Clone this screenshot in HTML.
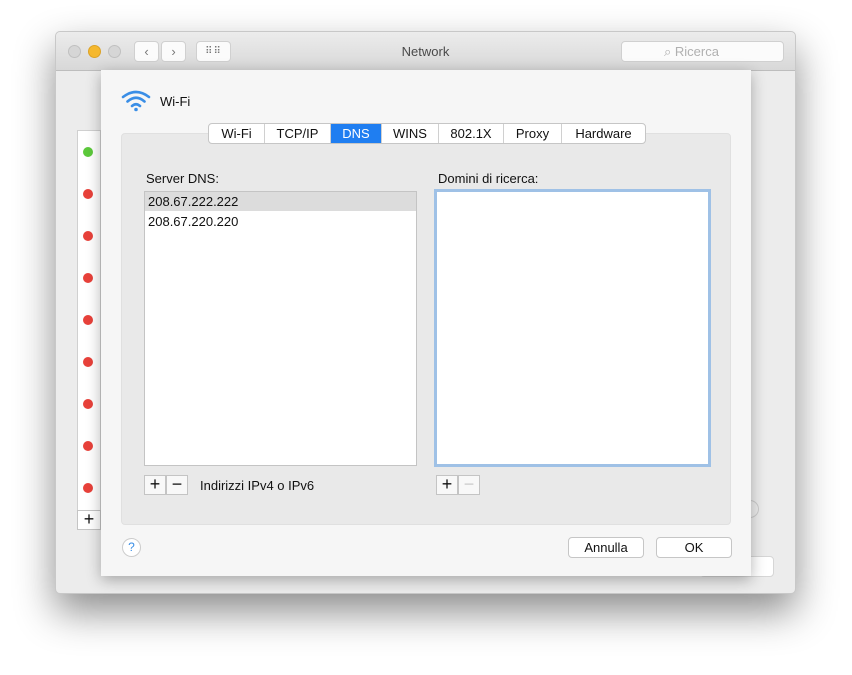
<!DOCTYPE html><html><head><style>
*{margin:0;padding:0;box-sizing:border-box}
body{width:852px;height:675px;background:#fff;font-family:"Liberation Sans",sans-serif;font-size:13px;color:#111;position:relative;overflow:hidden}
.a{position:absolute}
.win{left:55px;top:31px;width:741px;height:563px;background:#ececec;border:1px solid #c8c8c8;border-radius:5px;box-shadow:0 18px 40px rgba(0,0,0,.45)}
.tb{left:0;top:0;width:739px;height:39px;background:linear-gradient(#ececec,#d8d8d8);border-bottom:1px solid #bdbdbd;border-radius:5px 5px 0 0}
.light{width:13px;height:13px;border-radius:50%;top:13px;background:#d6d6d6;border:1px solid #c0c0c0}
.nb{top:9px;height:21px;background:#fbfbfb;border:1px solid #d0d0d0;border-radius:4px;color:#777;text-align:center;line-height:19px}
.sheet{left:101px;top:70px;width:650px;height:506px;background:#f6f6f6;box-shadow:0 4px 14px rgba(0,0,0,.3)}
.grp{left:121px;top:133px;width:610px;height:392px;background:#e9e9e9;border:1px solid #e0e0e0;border-radius:4px}
.tabs{left:208px;top:123px;height:21px;display:flex;background:#fff;border:1px solid #c6c6c6;border-radius:4px;overflow:hidden}
.tabs div{border-right:1px solid #d0d0d0;text-align:center;line-height:19px;font-size:13px}
.tabs div:last-child{border:none}
.list{background:#fff;border:1px solid #c4c4c4}
.pm{height:20px;width:22px;border:1px solid #c4c4c4;background:#f8f8f8;text-align:center;line-height:17px;font-size:18px}
.btn{top:537px;height:21px;background:#fff;border:1px solid #c6c6c6;border-radius:4px;text-align:center;line-height:19px}
.dot{left:83px;width:10px;height:10px;border-radius:50%;background:#e8413a}
</style></head><body>
<div class="a win">
<div class="a tb">
<div class="a light" style="left:12px"></div>
<div class="a light" style="left:32px;background:#f5b82e;border-color:#dca226"></div>
<div class="a light" style="left:52px"></div>
<div class="a nb" style="left:78px;width:25px">‹</div>
<div class="a nb" style="left:105px;width:25px">›</div>
<div class="a nb" style="left:140px;width:35px;font-size:10px;letter-spacing:1px">⠿⠿</div>
<div class="a" style="left:0;width:739px;top:12px;text-align:center;color:#4a4a4a">Network</div>
<div class="a nb" style="left:565px;width:163px;text-align:left;padding-left:42px;color:#b0b0b0">⌕ Ricerca</div>
</div>
</div>
<div class="a list" style="left:77px;top:130px;width:24px;height:400px;border-color:#d0d0d0"></div>
<div class="a dot" style="top:147px;background:#5cc93b"></div>
<div class="a dot" style="top:189px"></div><div class="a dot" style="top:231px"></div><div class="a dot" style="top:273px"></div><div class="a dot" style="top:315px"></div><div class="a dot" style="top:357px"></div><div class="a dot" style="top:399px"></div><div class="a dot" style="top:441px"></div><div class="a dot" style="top:483px"></div>
<div class="a pm" style="left:77px;top:510px;width:24px;height:20px;background:#fff">+</div>
<div class="a btn" style="left:700px;top:556px;width:74px;border-color:#d6d6d6"></div>
<div class="a" style="left:741px;top:500px;width:18px;height:18px;border-radius:50%;border:1px solid #ccc"></div>
<div class="a sheet"></div>
<svg class="a" style="left:120px;top:90px" width="34" height="22" viewBox="0 0 34 22"><g fill="none" stroke="#3a8ee6" stroke-width="2.6" stroke-linecap="round"><path d="M3 7 Q16 -3 29 7"/><path d="M7.5 11.5 Q16 4 24.5 11.5"/><path d="M12 16 Q16 12.5 20 16"/></g><circle cx="16" cy="19.5" r="1.8" fill="#3a8ee6"/></svg>
<div class="a" style="left:160px;top:94px">Wi-Fi</div>
<div class="a grp"></div>
<div class="a tabs">
<div style="width:56px">Wi-Fi</div><div style="width:66px">TCP/IP</div><div style="width:51px;background:#1f7ef1;color:#fff">DNS</div><div style="width:57px">WINS</div><div style="width:65px">802.1X</div><div style="width:58px">Proxy</div><div style="width:83px">Hardware</div>
</div>
<div class="a" style="left:146px;top:171px">Server DNS:</div>
<div class="a" style="left:438px;top:171px">Domini di ricerca:</div>
<div class="a list" style="left:144px;top:191px;width:273px;height:275px"></div>
<div class="a" style="left:145px;top:192px;width:271px;height:19px;background:#dcdcdc"></div>
<div class="a" style="left:148px;top:194px">208.67.222.222</div>
<div class="a" style="left:148px;top:214px">208.67.220.220</div>
<div class="a list" style="left:434px;top:189px;width:277px;height:278px;border:3px solid #9fc1e6"></div>
<div class="a pm" style="left:144px;top:475px">+</div><div class="a pm" style="left:166px;top:475px">−</div>
<div class="a" style="left:200px;top:478px">Indirizzi IPv4 o IPv6</div>
<div class="a pm" style="left:436px;top:475px">+</div><div class="a pm" style="left:458px;top:475px;color:#ccc">−</div>
<div class="a" style="left:122px;top:538px;width:19px;height:19px;border-radius:50%;background:#fff;border:1px solid #ccc;color:#3a8ee6;text-align:center;line-height:17px;font-size:12px">?</div>
<div class="a btn" style="left:568px;width:76px">Annulla</div>
<div class="a btn" style="left:656px;width:76px">OK</div>
</body></html>
